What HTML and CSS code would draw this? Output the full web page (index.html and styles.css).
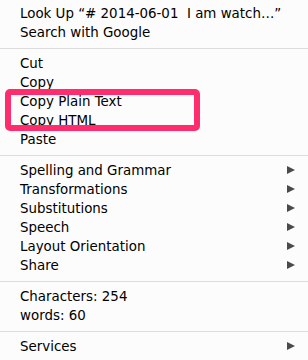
FILE: index.html
```html
<!DOCTYPE html>
<html lang="en">
<head>
  <meta charset="UTF-8" />
  <title>Context menu</title>
  <link rel="stylesheet" href="styles.css">
</head>
<body>
  <div class="menu">
    <div class="item">Look Up “# 2014-06-01&nbsp; I am watch…”</div>
    <div class="item">Search with Google</div>
    <div class="sep"></div>
    <div class="item">Cut</div>
    <div class="item">Copy</div>
    <div class="group">
      <div class="item">Copy Plain Text</div>
      <div class="item">Copy HTML</div>
      <div class="highlight"></div>
    </div>
    <div class="item">Paste</div>
    <div class="sep"></div>
    <div class="item sub">Spelling and Grammar</div>
    <div class="item sub">Transformations</div>
    <div class="item sub">Substitutions</div>
    <div class="item sub">Speech</div>
    <div class="item sub">Layout Orientation</div>
    <div class="item sub">Share</div>
    <div class="sep"></div>
    <div class="item">Characters: 254</div>
    <div class="item">words: 60</div>
    <div class="sep"></div>
    <div class="item sub">Services</div>
  </div>
</body>
</html>
```

FILE: styles.css
```css
body {
  margin: 0;
  background: #fff;
  font-family: 'DejaVu Sans', sans-serif;
}
.menu {
  width: 308px;
  height: 360px;
  padding-top: 4px;
  box-sizing: border-box;
  background: #fcfcfc;
}
.item {
  position: relative;
  height: 19px;
  line-height: 19px;
  padding-left: 20px;
  font-size: 13.4px;
  color: #000;
  white-space: nowrap;
}
.sub::after {
  content: "";
  position: absolute;
  right: 13px;
  top: 5px;
  border-left: 8px solid #4a4a4a;
  border-top: 4.5px solid transparent;
  border-bottom: 4.5px solid transparent;
}
.sep {
  height: 1px;
  margin: 6px 0 5px;
  background: #dcdcdc;
}
.group {
  position: relative;
}
.highlight {
  position: absolute;
  left: 5px;
  top: -3px;
  width: 195px;
  height: 42px;
  box-sizing: border-box;
  border: 6px solid #ff2d6e;
  border-radius: 5px;
}
```
